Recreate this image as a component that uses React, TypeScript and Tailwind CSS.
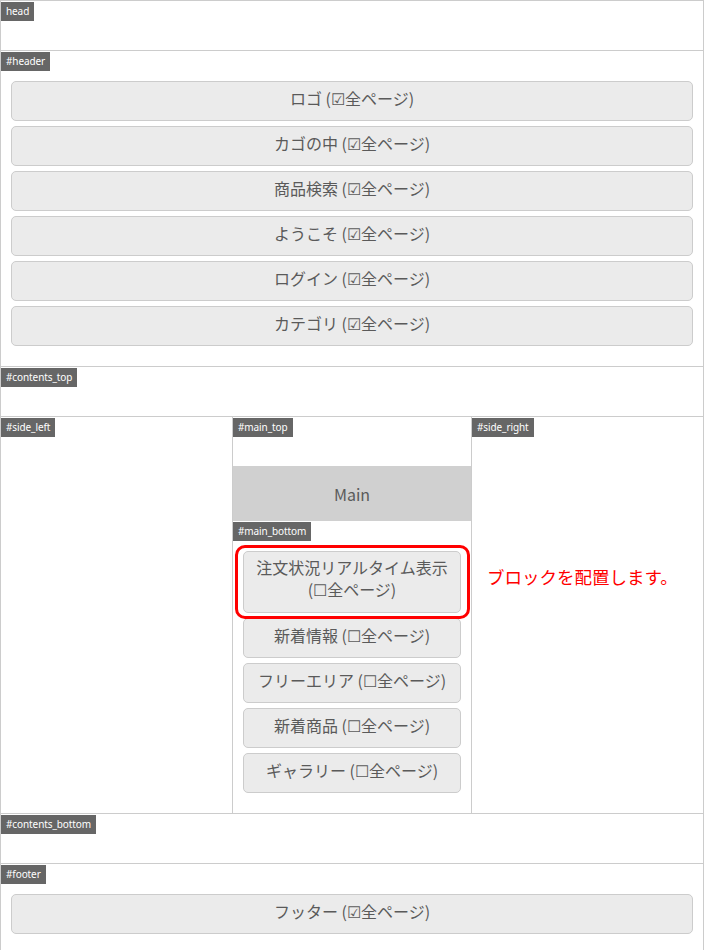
import React from "react";

const font = { fontFamily: '"Noto Sans CJK JP", "Noto Sans", sans-serif' };

function Label({ children }: { children: React.ReactNode }) {
  return (
    <div className="flex">
      <span
        className="mt-px bg-[#666666] text-white text-[10px] leading-[19px] px-[5px] tracking-[-0.1px]"
        style={{ fontFamily: '"Noto Sans", "Liberation Sans", sans-serif' }}
      >
        {children}
      </span>
    </div>
  );
}

function Block({ children }: { children: React.ReactNode }) {
  return (
    <div className="border border-[#cccccc] rounded-[5px] bg-[#ebebeb] text-[#5a5a5a] text-[16px] leading-[24px] pt-[4px] pb-[10px] text-center">
      {children}
    </div>
  );
}

const ON = "\u2611";
const OFF = "\u2610";

export default function App() {
  const header = ["ロゴ", "カゴの中", "商品検索", "ようこそ", "ログイン", "カテゴリ"];
  const mainBottom = ["新着情報", "フリーエリア", "新着商品", "ギャラリー"];
  return (
    <div className="w-[704px] bg-white border-x border-[#cccccc]" style={font}>
      <div className="h-[50px] border-t border-[#cccccc]">
        <Label>head</Label>
      </div>
      <div className="border-t border-[#cccccc]">
        <Label>#header</Label>
        <div className="px-[10px] pt-[10px] pb-[20px] flex flex-col gap-[5px]">
          {header.map((h) => (
            <Block key={h}>
              {h} ({ON}全ページ)
            </Block>
          ))}
        </div>
      </div>
      <div className="h-[50px] border-t border-[#cccccc]">
        <Label>#contents_top</Label>
      </div>
      <div className="flex border-t border-[#cccccc]">
        <div className="w-[231px]">
          <Label>#side_left</Label>
        </div>
        <div className="w-[239px] border-l border-[#cccccc]">
          <div className="h-[49px]">
            <Label>#main_top</Label>
          </div>
          <div className="h-[55px] bg-[#d0d0d0] text-[#5a5a5a] text-[16px] flex items-center justify-center">
            Main
          </div>
          <Label>#main_bottom</Label>
          <div className="px-[10px] pt-[10px] pb-[20px] flex flex-col gap-[5px]">
            <div className="relative">
              <div className="border border-[#cccccc] rounded-[5px] bg-[#ebebeb] text-[#5a5a5a] text-[16px] leading-[22px] pt-[4px] pb-[12px] text-center">
                注文状況リアルタイム表示
                <br />({OFF}全ページ)
              </div>
              <div className="absolute -left-[8px] -right-[9px] -top-[6px] -bottom-[6px] border-[3px] border-[#ff0000] rounded-[10px]" />
            </div>
            {mainBottom.map((h) => (
              <Block key={h}>
                {h} ({OFF}全ページ)
              </Block>
            ))}
          </div>
        </div>
        <div className="flex-1 border-l border-[#cccccc]">
          <Label>#side_right</Label>
          <div className="mt-[128px] pl-[15px] text-[17.5px] leading-[24px] text-[#ff0000]">
            ブロックを配置します。
          </div>
        </div>
      </div>
      <div className="h-[50px] border-t border-[#cccccc]">
        <Label>#contents_bottom</Label>
      </div>
      <div className="border-t border-[#cccccc]">
        <Label>#footer</Label>
        <div className="px-[10px] pt-[10px] pb-[20px] flex flex-col gap-[5px]">
          <Block>フッター ({ON}全ページ)</Block>
        </div>
      </div>
    </div>
  );
}
